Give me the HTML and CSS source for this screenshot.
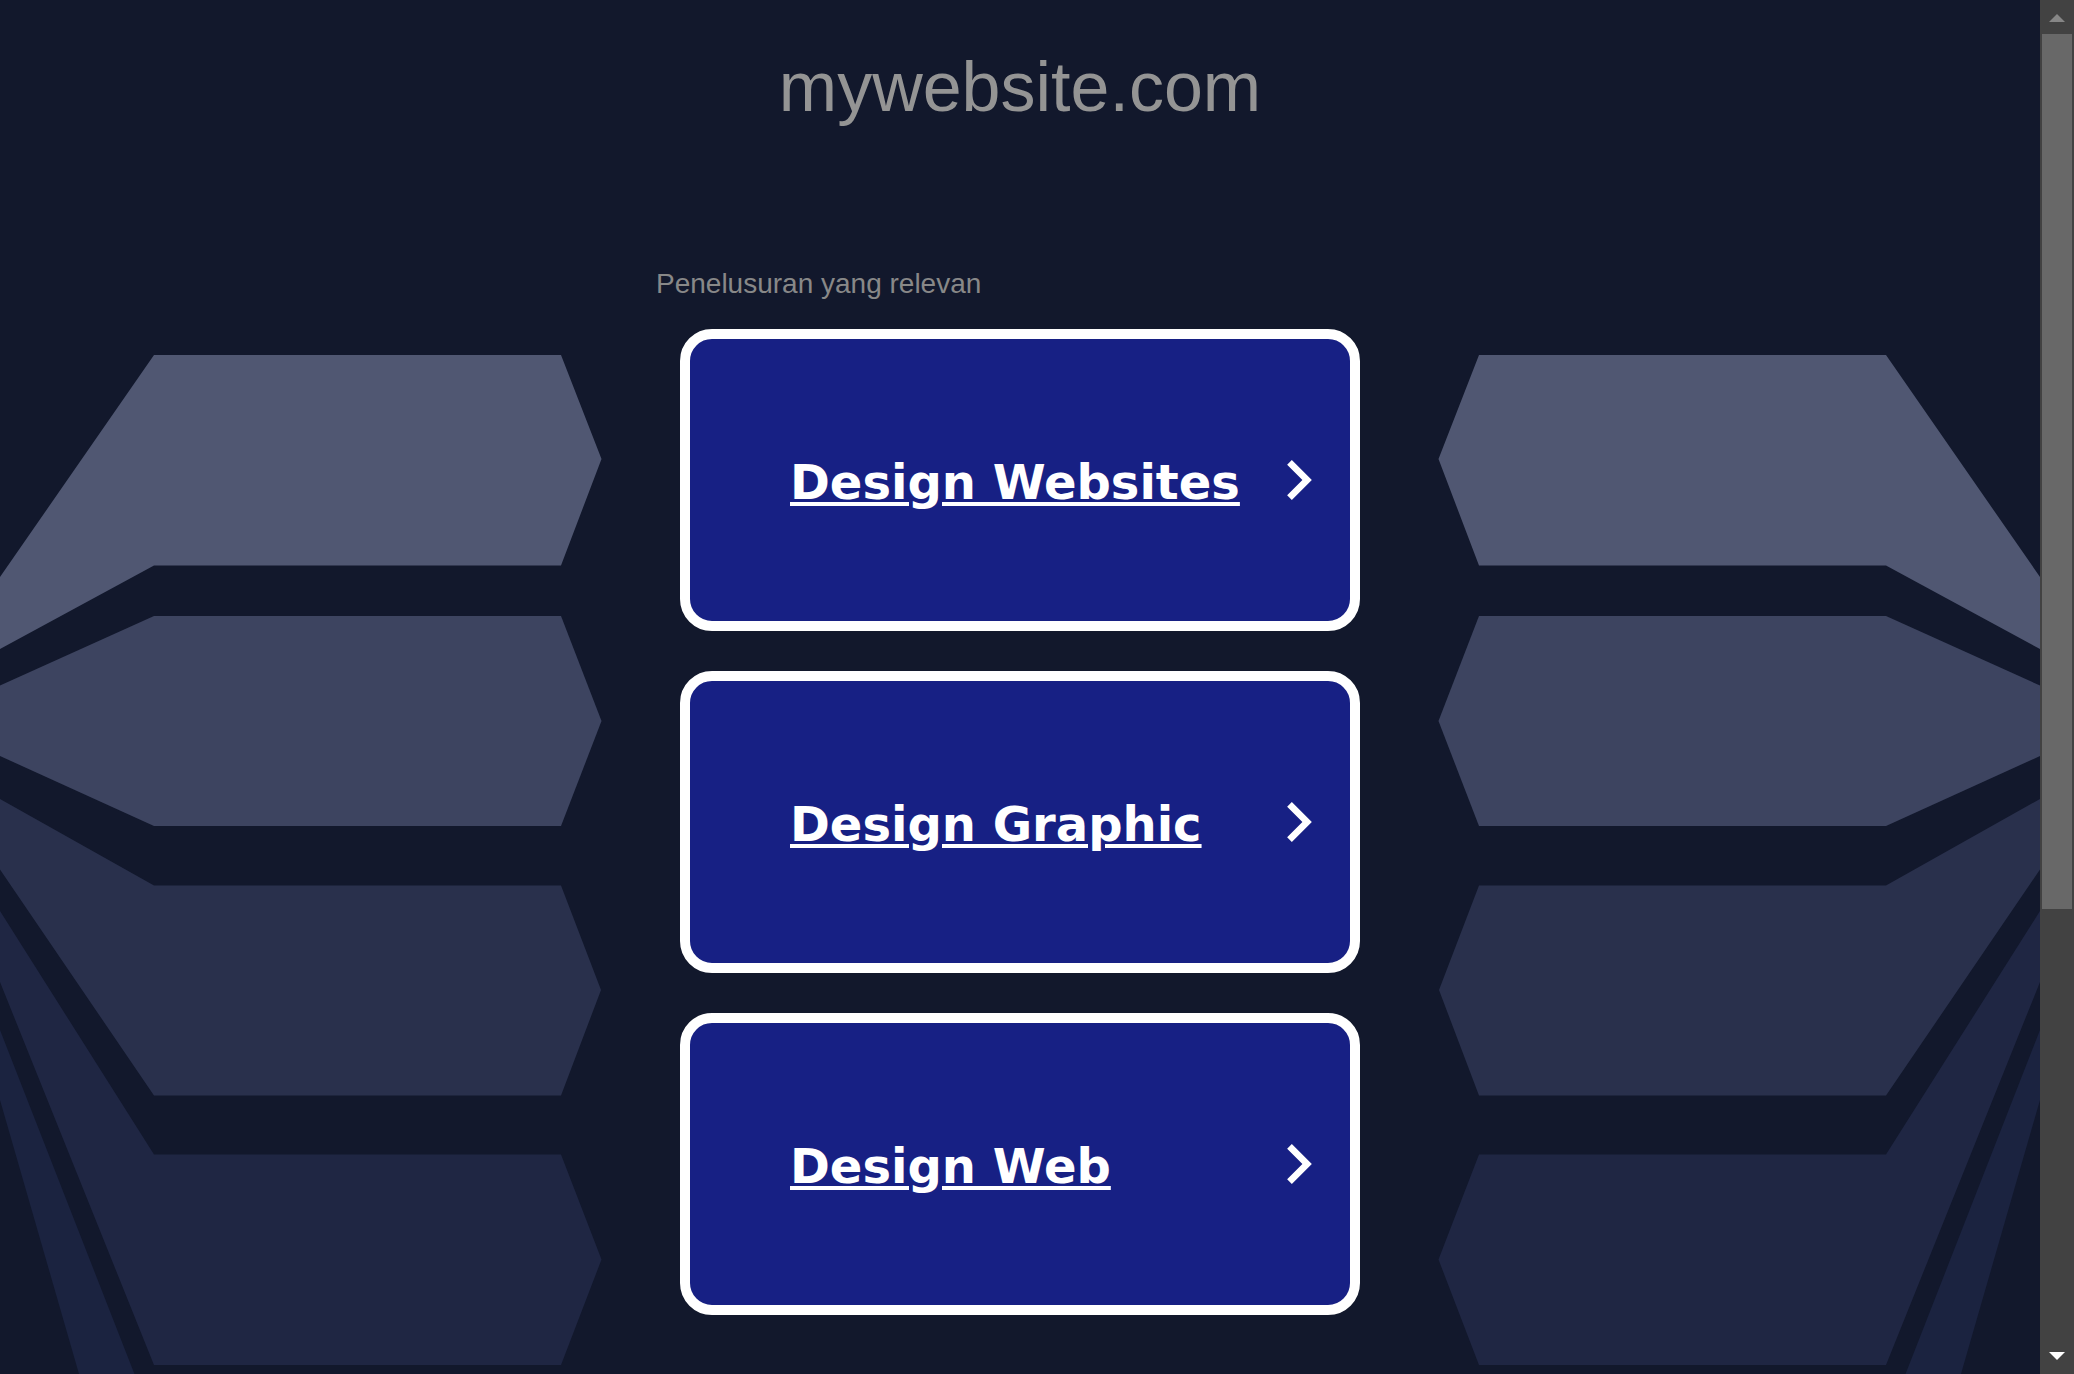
FILE: index.html
```html
<!DOCTYPE html>
<html lang="id">
<head>
<meta charset="utf-8">
<meta name="viewport" content="width=device-width, initial-scale=1">
<title>mywebsite.com</title>
<link rel="stylesheet" href="styles.css">
</head>
<body>
<div class="page">
  <svg class="backdrop" viewBox="0 0 2040 1374" preserveAspectRatio="xMidYMin slice" aria-hidden="true">
    <defs>
      <g id="wing">
        <path fill="#505772" d="M0 577 154 355H561L601.5 459 561 565.5H154L0 649Z"/>
        <path fill="#3d4460" d="M0 685.5 154 616H561L601.5 721 561 826H154L0 756Z"/>
        <path fill="#29304c" d="M0 799 154 885.5H561L601 990 561 1095.500H154L0 869.5Z"/>
        <path fill="#1f2643" d="M0 911 154 1154.500H561L601.5 1259.500 561 1365H154L0 982Z"/>
        <path fill="#1b2340" d="M0 1030 154 1424H561L601.5 1529 561 1634H154L0 1100Z"/>
      </g>
    </defs>
    <use href="#wing"/>
    <use href="#wing" transform="translate(2040 0) scale(-1 1)"/>
  </svg>
  <header class="site-header">
    <h1 class="domain">mywebsite.com</h1>
  </header>
  <main class="results">
    <h2 class="results-title">Penelusuran yang relevan</h2>
    <nav class="cards">
      <a class="card" href="#websites">
        <span class="card-label">Design Websites</span>
        <svg class="chevron" viewBox="8 6 8 12" aria-hidden="true"><path d="M10 6 8.590 7.410 13.170 12 8.590 16.590 10 18 16 12Z"/></svg>
      </a>
      <a class="card" href="#graphic">
        <span class="card-label">Design Graphic</span>
        <svg class="chevron" viewBox="8 6 8 12" aria-hidden="true"><path d="M10 6 8.590 7.410 13.170 12 8.590 16.590 10 18 16 12Z"/></svg>
      </a>
      <a class="card" href="#web">
        <span class="card-label">Design Web</span>
        <svg class="chevron" viewBox="8 6 8 12" aria-hidden="true"><path d="M10 6 8.590 7.410 13.170 12 8.590 16.590 10 18 16 12Z"/></svg>
      </a>
    </nav>
  </main>
</div>
<div class="scrollbar" aria-hidden="true">
  <svg class="arrow arrow-up" viewBox="0 0 16 8"><path d="M0 8 8 0 16 8Z"/></svg>
  <div class="track"><div class="thumb"></div></div>
  <svg class="arrow arrow-down" viewBox="0 0 16 8"><path d="M0 0H16L8 8Z"/></svg>
</div>
</body>
</html>
```
FILE: styles.css
```css
* {
  box-sizing: border-box;
}

body {
  margin: 0;
  height: 100vh;
  display: flex;
  overflow: hidden;
  background: #12182c;
  font-family: "Liberation Sans", Arial, sans-serif;
}

.page {
  position: relative;
  flex: 1;
  min-width: 0;
  overflow: hidden;
}

.backdrop {
  position: absolute;
  inset: 0;
  width: 100%;
  height: 100%;
}

.site-header {
  position: relative;
  padding-top: 47px;
  text-align: center;
}

.domain {
  margin: 0;
  font-size: 70px;
  line-height: 80px;
  font-weight: 400;
  color: #949494;
}

.results {
  position: relative;
  max-width: 728px;
  margin: 0 auto;
  padding-top: 141px;
}

.results-title {
  margin: 0 0 29px;
  font-size: 28px;
  line-height: 32px;
  font-weight: 400;
  color: #888888;
}

.cards {
  display: flex;
  flex-direction: column;
  gap: 40px;
  padding: 0 24px;
}

.card {
  display: flex;
  align-items: center;
  justify-content: space-between;
  min-height: 302px;
  padding: 0 38px 0 100px;
  border: 10px solid #ffffff;
  border-radius: 32px;
  background: #172084;
  color: #ffffff;
  text-decoration: none;
}

.card-label {
  padding-top: 4px;
  font-family: Verdana, "DejaVu Sans", sans-serif;
  font-size: 48px;
  line-height: 60px;
  font-weight: 700;
  text-decoration: underline;
  text-decoration-thickness: 4px;
  text-underline-offset: 3px;
}

.chevron {
  width: 27px;
  height: 40px;
  fill: #ffffff;
}

.scrollbar {
  flex: none;
  width: 34px;
  display: flex;
  flex-direction: column;
  align-items: center;
  background: #424242;
}

.arrow {
  flex: none;
  width: 16px;
  height: 8px;
}

.arrow-up {
  margin: 14px 0 12px;
  fill: #868686;
}

.arrow-down {
  margin: 12px 0 14px;
  fill: #ffffff;
}

.track {
  flex: 1;
  width: 30px;
}

.thumb {
  height: 67%;
  background: #686868;
}
```
